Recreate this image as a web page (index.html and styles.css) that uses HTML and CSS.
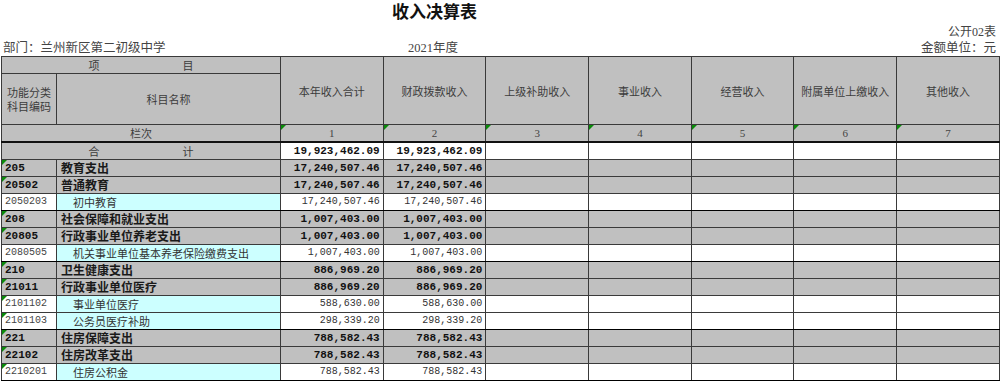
FILE: index.html
```html
<!DOCTYPE html>
<html lang="zh">
<head>
<meta charset="utf-8">
<link rel="stylesheet" href="styles.css">
</head>
<body>
<div class="page">
  <div class="title">收入决算表</div>
  <div class="sub">公开02表</div>
  <div class="meta">
    <span class="dept">部门：兰州新区第二初级中学</span>
    <span class="year">2021年度</span>
    <span class="unit">金额单位：元</span>
  </div>
  <table class="grid">
    <colgroup>
      <col class="c-code"><col class="c-name">
      <col class="c-num"><col class="c-num"><col class="c-num"><col class="c-num"><col class="c-num"><col class="c-num"><col class="c-num">
    </colgroup>
    <tbody>
      <tr class="h1">
        <td colspan="2" class="hd"><span class="spread">项</span><span class="spread">目</span></td>
        <td rowspan="2" class="hd">本年收入合计</td>
        <td rowspan="2" class="hd">财政拨款收入</td>
        <td rowspan="2" class="hd">上级补助收入</td>
        <td rowspan="2" class="hd">事业收入</td>
        <td rowspan="2" class="hd">经营收入</td>
        <td rowspan="2" class="hd bl">附属单位上缴收入</td>
        <td rowspan="2" class="hd">其他收入</td>
      </tr>
      <tr class="h2">
        <td class="hd two">功能分类<br>科目编码</td>
        <td class="hd">科目名称</td>
      </tr>
      <tr class="h3">
        <td colspan="2" class="hd">栏次</td>
        <td class="hd idx tri">1</td>
        <td class="hd idx tri">2</td>
        <td class="hd idx tri">3</td>
        <td class="hd idx tri">4</td>
        <td class="hd idx tri">5</td>
        <td class="hd idx tri bl">6</td>
        <td class="hd idx tri">7</td>
      </tr>
      <tr class="total">
        <td colspan="2" class="hd"><span class="spread">合</span><span class="spread">计</span></td>
        <td class="num b">19,923,462.09</td>
        <td class="num b">19,923,462.09</td>
        <td class="w"></td><td class="w"></td><td class="w"></td><td class="w bl"></td><td class="w"></td>
      </tr>
      <tr class="g">
        <td class="code b tri">205</td><td class="name b">教育支出</td>
        <td class="num b">17,240,507.46</td><td class="num b">17,240,507.46</td>
        <td></td><td></td><td></td><td class="bl"></td><td></td>
      </tr>
      <tr class="g">
        <td class="code b tri">20502</td><td class="name b">普通教育</td>
        <td class="num b">17,240,507.46</td><td class="num b">17,240,507.46</td>
        <td></td><td></td><td></td><td class="bl"></td><td></td>
      </tr>
      <tr class="leaf end">
        <td class="code">2050203</td><td class="name">初中教育</td>
        <td class="num">17,240,507.46</td><td class="num">17,240,507.46</td>
        <td></td><td></td><td></td><td class="bl"></td><td></td>
      </tr>
      <tr class="g">
        <td class="code b tri">208</td><td class="name b">社会保障和就业支出</td>
        <td class="num b">1,007,403.00</td><td class="num b">1,007,403.00</td>
        <td></td><td></td><td></td><td class="bl"></td><td></td>
      </tr>
      <tr class="g">
        <td class="code b tri">20805</td><td class="name b">行政事业单位养老支出</td>
        <td class="num b">1,007,403.00</td><td class="num b">1,007,403.00</td>
        <td></td><td></td><td></td><td class="bl"></td><td></td>
      </tr>
      <tr class="leaf end">
        <td class="code">2080505</td><td class="name">机关事业单位基本养老保险缴费支出</td>
        <td class="num">1,007,403.00</td><td class="num">1,007,403.00</td>
        <td></td><td></td><td></td><td class="bl"></td><td></td>
      </tr>
      <tr class="g">
        <td class="code b tri">210</td><td class="name b">卫生健康支出</td>
        <td class="num b">886,969.20</td><td class="num b">886,969.20</td>
        <td></td><td></td><td></td><td class="bl"></td><td></td>
      </tr>
      <tr class="g">
        <td class="code b tri">21011</td><td class="name b">行政事业单位医疗</td>
        <td class="num b">886,969.20</td><td class="num b">886,969.20</td>
        <td></td><td></td><td></td><td class="bl"></td><td></td>
      </tr>
      <tr class="leaf">
        <td class="code tri">2101102</td><td class="name">事业单位医疗</td>
        <td class="num">588,630.00</td><td class="num">588,630.00</td>
        <td></td><td></td><td></td><td class="bl"></td><td></td>
      </tr>
      <tr class="leaf end">
        <td class="code tri">2101103</td><td class="name">公务员医疗补助</td>
        <td class="num">298,339.20</td><td class="num">298,339.20</td>
        <td></td><td></td><td></td><td class="bl"></td><td></td>
      </tr>
      <tr class="g">
        <td class="code b tri">221</td><td class="name b">住房保障支出</td>
        <td class="num b">788,582.43</td><td class="num b">788,582.43</td>
        <td></td><td></td><td></td><td class="bl"></td><td></td>
      </tr>
      <tr class="g">
        <td class="code b tri">22102</td><td class="name b">住房改革支出</td>
        <td class="num b">788,582.43</td><td class="num b">788,582.43</td>
        <td></td><td></td><td></td><td class="bl"></td><td></td>
      </tr>
      <tr class="leaf end">
        <td class="code tri">2210201</td><td class="name">住房公积金</td>
        <td class="num">788,582.43</td><td class="num">788,582.43</td>
        <td></td><td></td><td></td><td class="bl"></td><td></td>
      </tr>
    </tbody>
  </table>
</div>
</body>
</html>
```

FILE: styles.css
```css
html, body {
  margin: 0;
  padding: 0;
  background: #ffffff;
}

.page {
  width: 1000px;
  font-family: "Noto Sans CJK SC", "Liberation Sans", sans-serif;
  color: #333;
}

.title {
  height: 24px;
  line-height: 22px;
  padding-left: 392px;
  font-size: 17px;
  font-weight: bold;
  color: #111;
}

.sub {
  height: 16px;
  line-height: 16px;
  text-align: right;
  padding-right: 4px;
  font-size: 12px;
  color: #444;
  font-family: "Liberation Serif", "Noto Sans CJK SC", serif;
}

.meta {
  height: 16px;
  line-height: 16px;
  display: flex;
  font-size: 12.5px;
  color: #444;
  font-family: "Liberation Serif", "Noto Sans CJK SC", serif;
}

.dept {
  width: 405px;
  padding-left: 3px;
}

.year {
  flex: 1;
}

.unit {
  padding-right: 4px;
}

.grid {
  border-collapse: collapse;
  table-layout: fixed;
  width: 998px;
  margin-left: 1px;
}

.c-code { width: 55px; }
.c-name { width: 224px; }
.c-num { width: 102.7px; }

.grid td {
  position: relative;
  border: 1px solid #3a3a3a;
  height: 16px;
  padding: 0;
  font-size: 11px;
  line-height: 16px;
  white-space: nowrap;
  overflow: hidden;
  background: #c0c0c0;
}

.grid td.bl {
  border-left-color: #000;
}

.hd {
  text-align: center;
  color: #3c3c3c;
}

.h2 td {
  height: 50px;
}

.two {
  line-height: 14px !important;
}

.spread {
  display: inline-block;
  width: 94px;
}

.h3 td {
  border-bottom: 1px solid #000;
}

.total td {
  height: 15px;
  border-top: 2px solid #111;
}

.idx {
  font-family: "Liberation Serif", serif;
  font-size: 11px;
  color: #444;
}

.tri::before {
  content: "";
  position: absolute;
  left: 0;
  top: 0;
  border-style: solid;
  border-width: 5px 5px 0 0;
  border-color: #0a8a0a transparent transparent transparent;
}

.total td.w,
.total td.num {
  background: #ffffff;
}

.num {
  text-align: right;
  padding-right: 3px !important;
  font-family: "Liberation Mono", monospace;
  font-size: 10px !important;
  color: #333;
}

.num.b {
  font-size: 11px !important;
  font-weight: bold;
  color: #111;
}

.code {
  padding-left: 3px !important;
  font-family: "Liberation Mono", monospace;
  font-size: 10px !important;
  color: #444;
}

.code.b {
  font-size: 11px !important;
  font-weight: bold;
  color: #111;
}

.name {
  padding-left: 16px !important;
  font-size: 11px !important;
  color: #333;
}

.name.b {
  padding-left: 4px !important;
  font-size: 12px !important;
  font-weight: bold;
  color: #1a1a1a;
}

.leaf td {
  background: #ffffff;
}

.leaf td.name {
  background: #ccffff;
}

.leaf.end td {
  border-bottom: 1px solid #000;
}
```
